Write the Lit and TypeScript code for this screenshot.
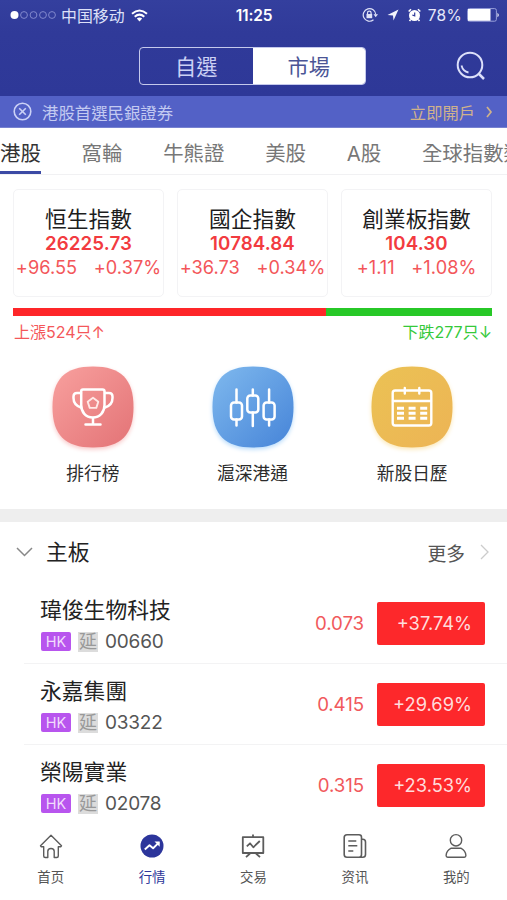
import { LitElement, html, css, svg } from "lit";
import { customElement, property } from "lit/decorators.js";
import { styleMap } from "lit/directives/style-map.js";
import { classMap } from "lit/directives/class-map.js";

const icons: Record<string, unknown> = {
  trophy: svg`<g fill="none" stroke="#fff" stroke-width="2.500" stroke-linecap="round" stroke-linejoin="round">
    <path d="M31 23.500h19.500q2 0 2 2v13.500c0 7-4.500 12.500-11.700 12.500S29.200 46 29.200 39V25.500q0-2 1.800-2z"/>
    <path d="M29 27h-4q-3.500 0-3.500 3.500v1.500q0 7 7.500 9.500M53 27h4q3.500 0 3.500 3.500v1.500q0 7-7.500 9.500M41 52v5M33.500 58.500h15"/>
    <path stroke="#ffe8e6" stroke-width="1.900" d="M41 31.800l5.300 3.900-2 6.200h-6.600l-2-6.200z"/></g>`,
  candles: svg`<g fill="none" stroke="#fff" stroke-width="2.500" stroke-linecap="round">
    <rect x="19" y="36.500" width="11" height="17" rx="3"/><path d="M24.500 23.500v13M24.500 53.500v6"/>
    <rect x="35.300" y="29.500" width="11" height="17" rx="3"/><path d="M40.800 23.500v6M40.800 46.500v13.500"/>
    <rect x="51.600" y="36.500" width="11" height="17" rx="3"/><path d="M57.100 23.500v13M57.100 53.500v6"/></g>`,
  calendar: svg`<g fill="none" stroke="#fff" stroke-width="2.400" stroke-linecap="round">
    <rect x="21.700" y="24.500" width="38.600" height="35" rx="2.500"/><path d="M22 35h38M33.800 22v5.500M48.300 22v5.500"/>
    <g stroke-width="3" stroke-linecap="butt"><path stroke-dasharray="7 4.600" d="M26 42.300h30.200M26 47.300h30.200M26 52.300h30.200"/></g></g>`,
  home: svg`<path d="M2.500 12.800L13 2.300l10.500 10.500-.8 1h-2.400v9.200q0 1.500-1.500 1.500h-2.600v-6.200q0-2.800-3.200-2.800t-3.200 2.800v6.200H7.200q-1.500 0-1.500-1.500v-9.200H3.300z"/>`,
  trend: svg`<circle cx="13" cy="13" r="11.500" fill="#2c359b" stroke="none"/><path d="M5.800 16.500l4.700-4.300 3.600 3 6-5.800" stroke="#fff" stroke-width="1.900"/><path d="M15.500 8.500h5.200v5.200z" fill="#fff" stroke="none"/>`,
  trade: svg`<path stroke-width="1.800" d="M2.800 4.200h20.500v15.800H2.800zM13 1.500v2.500M10 20.500l-4 3.600M16 20.500l4 3.600M6.800 13.300l3.200-3 3.300 4 6.500-6.300"/>`,
  news: svg`<path stroke-width="1.600" d="M5 1.800h12q2.500 0 2.500 2.500v17.200q0 2.800-2.500 2.800H5q-2.800 0-2.800-2.800V4.600Q2.200 1.800 5 1.800zM19.500 6.200h1.300q2.700 0 2.700 2.700v12.600q0 2.800-2.800 2.800H17M19.500 6v12M6.300 8h8M6.300 12.800h9M6.300 18h5"/>`,
  user: svg`<circle cx="13" cy="7.300" r="5.700"/><path d="M8.200 15.200h9.600q4.700 2.300 5.100 7.300 0 1.700-1.600 1.700H4.700q-1.600 0-1.600-1.700.4-5 5.100-7.300z"/>`,
};

@customElement("status-bar")
class StatusBar extends LitElement {
  static styles = css`
    :host { display: grid; grid-template-columns: 1fr auto 1fr; align-items: center; height: 30px; padding: 0 7px 0 10px; color: #fff; }
    .side { display: flex; align-items: center; }
    .right { justify-content: flex-end; }
    .dots { display: block; margin-right: 4px; }
    .carrier { font-size: 15.900px; color: #dde0f8; margin-right: 6px; }
    .time { font-size: 15.500px; font-weight: 600; letter-spacing: -0.2px; margin-right: 2px; }
    .pct { font-size: 15.500px; letter-spacing: 0.3px; margin: 0 5px 0 7px; color: #e6e8fa; }
    svg { display: block; flex: none; }
    .gap { margin-left: 9px; }
  `;
  render() {
    return html`<div class="side">
        <svg class="dots" width="47" height="10"><circle cx="4.500" cy="5" r="4" fill="#fff"/>
          ${[14, 23.500, 33, 42].map((x) => svg`<circle cx=${x} cy="5" r="3.400" fill="none" stroke="#8188cd"/>`)}</svg>
        <span class="carrier">中国移动</span>
        <svg width="17" height="13" viewBox="0 0 17 13" fill="none" stroke="#fff" stroke-width="2"><path d="M1 4.800q7.500-6.500 15 0M3.700 7.800q4.800-4.300 9.600 0"/><path d="M5.800 9.600q2.700-2 5.400 0l-2.700 3z" fill="#fff" stroke="none"/></svg>
      </div>
      <span class="time">11:25</span>
      <div class="side right">
        <svg width="16" height="16" viewBox="0 0 16 16" fill="none" stroke="#dfe2f7" stroke-width="1.200"><path d="M11.500 12.800A6.300 6.300 0 1 1 13.800 7.500"/><path d="M11.500 7.300h4.500l-2.300 3z" fill="#dfe2f7" stroke="none"/><path d="M5.500 7.500V6q0-1.800 1.800-1.800T9.100 6v1.500"/><path d="M4.500 7h5.700v4.200H4.500z" fill="#dfe2f7" stroke="none"/></svg>
        <svg class="gap" width="12" height="12" viewBox="0 0 12 12"><path d="M11.500.5L6.500 11.500 6 6.500 .5 6z" fill="#f3f4fc"/></svg>
        <svg class="gap" width="13" height="14" viewBox="0 0 13 14"><circle cx="6.500" cy="7.500" r="5.500" fill="#fff"/><path d="M.7 3.500L3 1.200M10 1.200l2.300 2.300M2.700 11.500L1.500 13M10.300 11.500l1.200 1.500" stroke="#fff" stroke-width="1.600"/><path d="M6.700 4.500v3.300L4.300 7" fill="none" stroke="#303b9a" stroke-width="1.200"/></svg>
        <span class="pct">78%</span>
        <svg width="33" height="14" viewBox="0 0 33 14"><rect x=".6" y=".6" width="28.800" height="12.600" rx="1.800" fill="none" stroke="#99a0da" stroke-width="1"/><path d="M1 1h22.500v11.800H1z" fill="#fff"/><path d="M30.500 4.700q2.500 2.300 0 4.600z" fill="#fff"/></svg>
      </div>`;
  }
}

@customElement("index-card")
class IndexCard extends LitElement {
  @property() name = "";
  @property() value = "";
  @property() delta = "";
  @property() percent = "";
  static styles = css`
    :host { display: flex; flex-direction: column; align-items: center; box-sizing: border-box; height: 108px; padding-top: 15px; border: 1.500px solid #f3f3f5; border-radius: 5px; white-space: nowrap; }
    .name { font-size: 21.700px; line-height: 28px; color: #1d1d1d; }
    .value { font-size: 18.700px; line-height: 22px; font-weight: 600; letter-spacing: 0.1px; color: #f23b40; }
    .change { display: flex; gap: 16.500px; font-size: 18.200px; line-height: 24px; letter-spacing: 0.05px; color: #f3565a; }
  `;
  render() {
    return html`<span class="name">${this.name}</span><span class="value">${this.value}</span>
      <div class="change"><span>${this.delta}</span><span>${this.percent}</span></div>`;
  }
}

@customElement("stock-row")
class StockRow extends LitElement {
  @property() name = "";
  @property() code = "";
  @property() price = "";
  @property() change = "";
  static styles = css`
    :host { display: flex; flex: none; align-items: center; box-sizing: border-box; height: 81px; margin-left: 24px; padding: 0 22px 0 16px; border-bottom: 1px solid #f3f3f4; }
    :host(:last-of-type) { border-bottom-color: transparent; }
    .info { flex: 1; }
    .name { font-size: 21.800px; line-height: 30px; color: #222; padding-top: 5px; }
    .meta { display: flex; align-items: center; height: 30px; margin-top: 2px; }
    .market { width: 30px; height: 19px; margin-left: 1px; border-radius: 2px; background: #b855ee; color: #f1dcfc; font: 14.500px/20px Inter, sans-serif; text-align: center; }
    .delay { width: 20px; height: 20px; margin: 0 7px; background: #dcdcdc; color: #999; font-size: 18px; line-height: 19px; text-align: center; overflow: hidden; }
    .code { font-size: 19px; letter-spacing: -0.2px; color: #555; }
    .price { font-size: 18.700px; color: #f1595c; letter-spacing: -0.1px; margin-right: 13px; }
    .change { box-sizing: border-box; width: 108px; height: 43px; padding-right: 13px; border-radius: 2px; background: #fd282b; color: #ffdcdc; font-size: 18.300px; line-height: 43px; text-align: right; }
  `;
  render() {
    return html`<div class="info"><div class="name">${this.name}</div>
        <div class="meta"><span class="market">HK</span><span class="delay">延</span><span class="code">${this.code}</span></div></div>
      <span class="price">${this.price}</span><span class="change">${this.change}</span>`;
  }
}

@customElement("app-root")
class AppRoot extends LitElement {
  static styles = css`
    :host { display: flex; flex-direction: column; width: 507px; height: 900px; overflow: hidden; background: #fff; font-family: Inter, "Noto Sans CJK TC", "Noto Sans CJK SC", sans-serif; }
    svg { display: block; flex: none; }
    .header { height: 96px; flex: none; background: linear-gradient(#343f9e, #303a99 35%, #2e3898); }
    .switch { display: grid; grid-template-columns: 139px 227px 1fr; align-items: center; height: 38px; margin-top: 17px; }
    .segments { grid-column: 2; display: flex; box-sizing: border-box; height: 38px; border: 1.500px solid #c5c9ec; border-radius: 4px; overflow: hidden; font-size: 21.200px; line-height: 38px; text-align: center; color: #ccd1f4; }
    .segment { flex: 1; }
    .active-segment { background: #fff; color: #4b5596; }
    .search { margin-left: 90px; }
    .banner { display: flex; align-items: center; box-sizing: border-box; height: 32px; flex: none; padding: 0 14px 0 13px; background: #5361c6; border-bottom: 1px solid #7782d0; font-size: 16.400px; color: #c3caf1; }
    .banner-text { flex: 1; margin-left: 10px; }
    .open { color: #cfb28c; margin-right: 11px; font-size: 16.300px; }
    .tabs { display: flex; height: 46px; flex: none; border-bottom: 1.500px solid #f1f1f3; font-size: 20.400px; line-height: 51px; color: #777; white-space: nowrap; gap: 40.800px; overflow: hidden; }
    .tab { flex: none; box-sizing: border-box; height: 46px; }
    .current { color: #333; border-bottom: 3px solid #3c4aa5; }
    .cards { display: grid; grid-template-columns: repeat(3, 151px); justify-content: space-between; margin: 14px 15px 11px 13px; }
    .ratio { display: flex; height: 8px; flex: none; margin: 0 15px 0 13px; background: #27c827; }
    .rise { background: #fe2629; }
    .counts { display: flex; justify-content: space-between; margin: 4px 15px 0 14px; height: 25px; flex: none; line-height: 25px; font-size: 16px; }
    .up { color: #f4575a; }
    .down { color: #35c93a; }
    .shortcuts { display: grid; grid-template-columns: repeat(3, 159.700px); justify-content: center; height: 164px; flex: none; padding-top: 21px; box-sizing: border-box; margin-right: 2px; }
    .shortcut { display: flex; flex-direction: column; align-items: center; }
    .shortcut-label { font-size: 17.700px; line-height: 26px; margin-top: 13px; color: #2c2c2c; }
    .glow-trophy { filter: drop-shadow(0 2px 2px #f9c9c9); }
    .glow-candles { filter: drop-shadow(0 2px 2px #b9dcfb); }
    .glow-calendar { filter: drop-shadow(0 2px 2px #fbe8b8); }
    .divider { height: 13px; flex: none; background: #eee; }
    .section { display: flex; align-items: center; box-sizing: border-box; height: 61px; flex: none; padding: 0 18px 1px 16px; }
    .section-title { flex: 1; margin-left: 13px; font-size: 21.700px; line-height: 30px; color: #222; }
    .more { font-size: 18.800px; color: #555; margin-right: 15px; }
    .nav { display: grid; grid-template-columns: repeat(5, 1fr); height: 74px; flex: none; background: #fff; }
    .nav-item { display: flex; flex-direction: column; align-items: center; padding-top: 7px; font-size: 13.400px; line-height: 20px; color: #555; gap: 8px; }
    .selected { color: #2d369a; }
  `;
  private stocks = [
    ["瑋俊生物科技", "00660", "0.073", "+37.74%"],
    ["永嘉集團", "03322", "0.415", "+29.69%"],
    ["榮陽實業", "02078", "0.315", "+23.53%"],
  ];
  render() {
    const rise = 524, fall = 277;
    return html`
      <div class="header">
        <status-bar></status-bar>
        <div class="switch">
          <div class="segments"><span class="segment">自選</span><span class="segment active-segment">市場</span></div>
          <svg class="search" width="30" height="30" viewBox="0 0 30 30" fill="none" stroke="#dce0fa" stroke-width="2"><circle cx="14" cy="14" r="12.300"/><path d="M22.500 22.500l5.500 5.500" stroke-width="2.500"/><path d="M5.500 14.500q1.500 6 7 7" stroke-width="1.800"/></svg>
        </div>
      </div>
      <div class="banner">
        <svg width="19" height="19" viewBox="0 0 19 19" fill="none" stroke="#cbd1f6" stroke-width="1.600"><circle cx="9.500" cy="9.500" r="8.300"/><path d="M6.200 6.200l6.600 6.600M12.800 6.200l-6.600 6.600"/></svg>
        <span class="banner-text">港股首選民銀證券</span><span class="open">立即開戶</span>
        <svg width="7" height="12" viewBox="0 0 7 12" fill="none" stroke="#cfb28c" stroke-width="1.700"><path d="M1 1l4 5-4 5"/></svg>
      </div>
      <div class="tabs">${["港股", "窩輪", "牛熊證", "美股", "A股", "全球指數類"].map((t, i) => html`<span class=${classMap({ tab: true, current: i === 0 })}>${t}</span>`)}</div>
      <div class="cards">
        <index-card name="恒生指數" value="26225.73" delta="+96.55" percent="+0.37%"></index-card>
        <index-card name="國企指數" value="10784.84" delta="+36.73" percent="+0.34%"></index-card>
        <index-card name="創業板指數" value="104.30" delta="+1.11" percent="+1.08%"></index-card>
      </div>
      <div class="ratio"><div class="rise" style=${styleMap({ width: `${(rise / (rise + fall)) * 100}%` })}></div></div>
      <div class="counts"><span class="up">上漲${rise}只↑</span><span class="down">下跌${fall}只↓</span></div>
      <div class="shortcuts">
        ${[["trophy", "排行榜", "#f8a09e", "#e37376"], ["candles", "滬深港通", "#7fb9ee", "#4684d8"], ["calendar", "新股日歷", "#ebc254", "#edb455"]].map(
          ([id, label, from, to]) => html`<div class="shortcut">
            <svg class="glow-${id}" width="82" height="82" viewBox="0 0 82 82"><defs><linearGradient id="fill-${id}" x1="0" y1="0" x2="1" y2="1"><stop stop-color=${from}></stop><stop offset="1" stop-color=${to}></stop></linearGradient></defs>
              <path fill="url(#fill-${id})" d="M41 .5C69 .5 81.500 13 81.500 41S69 81.500 41 81.500.5 69 .5 41 13 .5 41 .5z"/>${icons[id]}</svg>
            <span class="shortcut-label">${label}</span></div>`)}
      </div>
      <div class="divider"></div>
      <div class="section">
        <svg width="17" height="10" viewBox="0 0 17 10" fill="none" stroke="#888" stroke-width="1.500"><path d="M1 1l7.500 7.500L16 1"/></svg>
        <span class="section-title">主板</span><span class="more">更多</span>
        <svg width="9" height="16" viewBox="0 0 9 16" fill="none" stroke="#ccc" stroke-width="1.300"><path d="M1 1l7 7-7 7"/></svg>
      </div>
      ${this.stocks.map(([name, code, price, change]) => html`<stock-row name=${name} code=${code} price=${price} change=${change}></stock-row>`)}
      <div class="nav">
        ${[["home", "首页"], ["trend", "行情"], ["trade", "交易"], ["news", "资讯"], ["user", "我的"]].map(
          ([id, label], i) => html`<div class=${classMap({ "nav-item": true, selected: i === 1 })}>
            <svg width="26" height="26" viewBox="0 0 26 26" fill="none" stroke="#5c5c5c" stroke-width="1.400" stroke-linejoin="round">${icons[id]}</svg>${label}</div>`)}
      </div>`;
  }
}
